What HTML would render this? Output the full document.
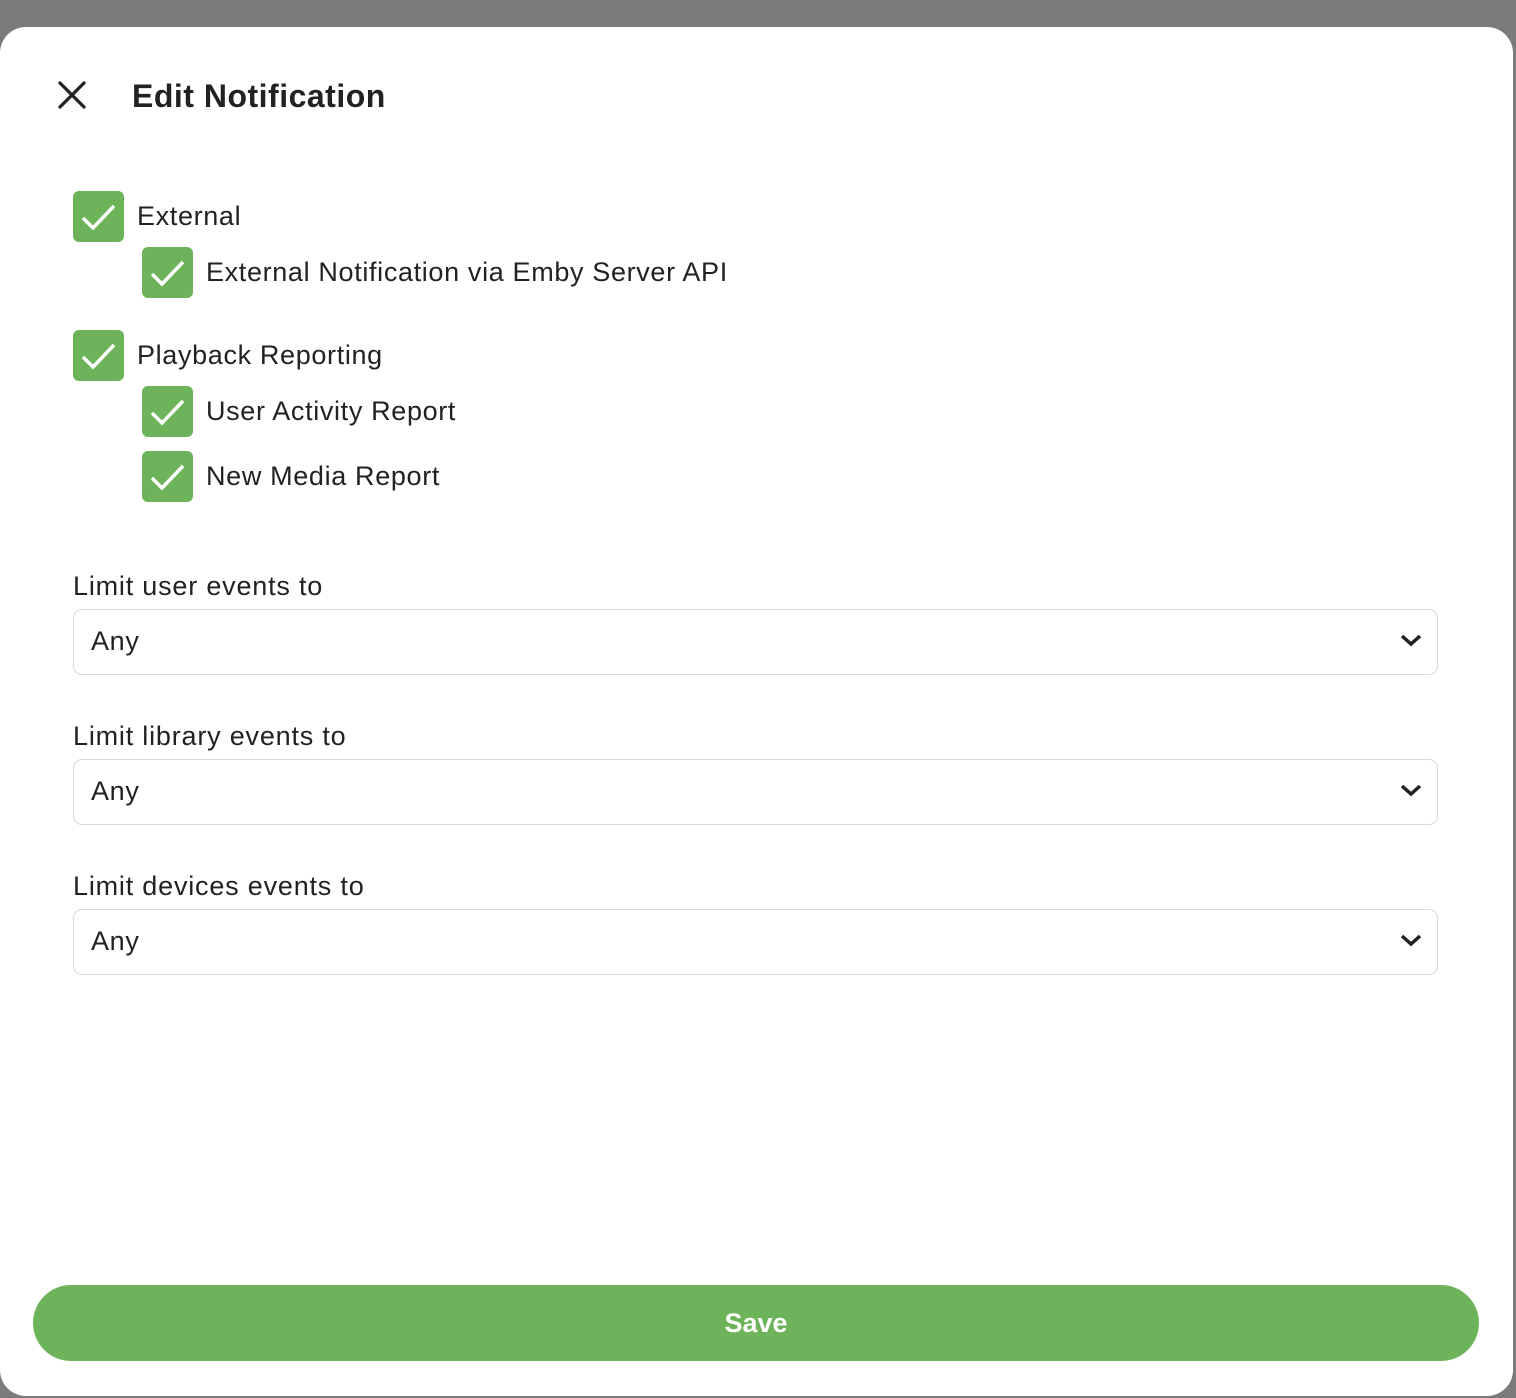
<!DOCTYPE html>
<html><head><style>
body{margin:0;width:1516px;height:1398px;background:#7b7b7b;font-family:"Liberation Sans",sans-serif;color:#222;position:relative;overflow:hidden}
.m{position:absolute;left:0;top:27px;width:1513px;height:1369px;background:#fff;border-radius:26px}
.a{position:absolute}
.cb{position:absolute;width:51px;height:51px;background:#6db35a;border-radius:6px}
.cb svg{position:absolute;left:0;top:0}
.t{position:absolute;font-size:27px;line-height:32px;white-space:nowrap;letter-spacing:0.65px}
.sel{position:absolute;left:73px;width:1363px;height:64px;border:1px solid #d9d9d9;border-radius:9px}
.sel span{position:absolute;left:17px;top:16px;font-size:27px;letter-spacing:0.65px}
.sel svg{position:absolute;right:14px;top:22px}
.save{position:absolute;left:33px;top:1285px;width:1446px;height:76px;background:#6db35a;border-radius:38px;color:#fff;font-weight:bold;font-size:27px;text-align:center;line-height:76px}
</style></head><body>
<div class="m"></div>
<svg class="a" style="left:58px;top:81px" width="28" height="28" viewBox="0 0 28 28"><path d="M2 2L26 26M26 2L2 26" stroke="#222" stroke-width="3.3" stroke-linecap="round"/></svg>
<div class="t" style="left:132px;top:78px;font-size:32px;font-weight:bold;line-height:36px;letter-spacing:0.5px">Edit Notification</div>

<div class="cb" style="left:73px;top:191px"><svg width="51" height="51"><path d="M10 27L20 37L41 15" fill="none" stroke="#fff" stroke-width="3.5"/></svg></div>
<div class="t" style="left:137px;top:200px">External</div>
<div class="cb" style="left:142px;top:247px"><svg width="51" height="51"><path d="M10 27L20 37L41 15" fill="none" stroke="#fff" stroke-width="3.5"/></svg></div>
<div class="t" style="left:206px;top:256px">External Notification via Emby Server API</div>
<div class="cb" style="left:73px;top:330px"><svg width="51" height="51"><path d="M10 27L20 37L41 15" fill="none" stroke="#fff" stroke-width="3.5"/></svg></div>
<div class="t" style="left:137px;top:339px">Playback Reporting</div>
<div class="cb" style="left:142px;top:386px"><svg width="51" height="51"><path d="M10 27L20 37L41 15" fill="none" stroke="#fff" stroke-width="3.5"/></svg></div>
<div class="t" style="left:206px;top:395px">User Activity Report</div>
<div class="cb" style="left:142px;top:451px"><svg width="51" height="51"><path d="M10 27L20 37L41 15" fill="none" stroke="#fff" stroke-width="3.5"/></svg></div>
<div class="t" style="left:206px;top:460px">New Media Report</div>

<div class="t" style="left:73px;top:570px;letter-spacing:0.8px">Limit user events to</div>
<div class="sel" style="top:609px"><span>Any</span><svg width="24" height="16"><path d="M3 4L12 12L21 4" fill="none" stroke="#222" stroke-width="3.5"/></svg></div>
<div class="t" style="left:73px;top:720px;letter-spacing:0.8px">Limit library events to</div>
<div class="sel" style="top:759px"><span>Any</span><svg width="24" height="16"><path d="M3 4L12 12L21 4" fill="none" stroke="#222" stroke-width="3.5"/></svg></div>
<div class="t" style="left:73px;top:870px;letter-spacing:0.8px">Limit devices events to</div>
<div class="sel" style="top:909px"><span>Any</span><svg width="24" height="16"><path d="M3 4L12 12L21 4" fill="none" stroke="#222" stroke-width="3.5"/></svg></div>

<div class="save">Save</div>
</body></html>
